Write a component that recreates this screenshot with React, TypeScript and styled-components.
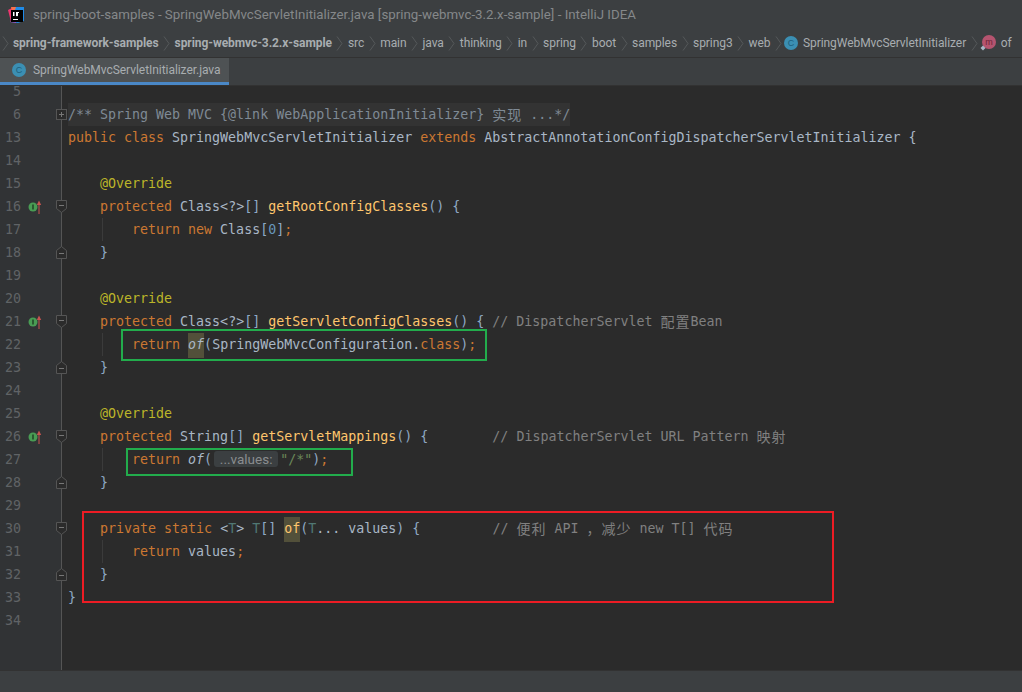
import React from "react";
import styled, { createGlobalStyle } from "styled-components";

type TokenKind = "plain" | "kw" | "method" | "anno" | "comment" | "doc" | "num" | "str" | "tparam" | "brace";
type Token = { t: string; k?: TokenKind; cjk?: boolean; italic?: boolean; hl?: boolean; hint?: boolean };
type Line = {
  no: number;
  fold?: "plus" | "open" | "close";
  marker?: boolean;
  guide?: boolean;
  shaded?: boolean;
  code: Token[];
};

const crumbs = ["src", "main", "java", "thinking", "in", "spring", "boot", "samples", "spring3", "web"];

const lines: Line[] = [
  { no: 5, code: [] },
  {
    no: 6,
    fold: "plus",
    shaded: true,
    code: [
      { t: "/** Spring Web MVC {@link WebApplicationInitializer} ", k: "doc" },
      { t: "实现", k: "doc", cjk: true },
      { t: " ...*/", k: "doc" },
    ],
  },
  {
    no: 13,
    code: [
      { t: "public class ", k: "kw" },
      { t: "SpringWebMvcServletInitializer " },
      { t: "extends ", k: "kw" },
      { t: "AbstractAnnotationConfigDispatcherServletInitializer {" },
    ],
  },
  { no: 14, code: [] },
  { no: 15, code: [{ t: "    " }, { t: "@Override", k: "anno" }] },
  {
    no: 16,
    fold: "open",
    marker: true,
    code: [
      { t: "    " },
      { t: "protected ", k: "kw" },
      { t: "Class<?>" },
      { t: "[] ", k: "brace" },
      { t: "getRootConfigClasses", k: "method" },
      { t: "() {", k: "brace" },
    ],
  },
  {
    no: 17,
    guide: true,
    code: [
      { t: "        " },
      { t: "return new ", k: "kw" },
      { t: "Class" },
      { t: "[", k: "brace" },
      { t: "0", k: "num" },
      { t: "]", k: "brace" },
      { t: ";", k: "kw" },
    ],
  },
  { no: 18, fold: "close", code: [{ t: "    " }, { t: "}", k: "brace" }] },
  { no: 19, code: [] },
  { no: 20, code: [{ t: "    " }, { t: "@Override", k: "anno" }] },
  {
    no: 21,
    fold: "open",
    marker: true,
    code: [
      { t: "    " },
      { t: "protected ", k: "kw" },
      { t: "Class<?>" },
      { t: "[] ", k: "brace" },
      { t: "getServletConfigClasses", k: "method" },
      { t: "() { ", k: "brace" },
      { t: "// DispatcherServlet ", k: "comment" },
      { t: "配置", k: "comment", cjk: true },
      { t: "Bean", k: "comment" },
    ],
  },
  {
    no: 22,
    guide: true,
    code: [
      { t: "        " },
      { t: "return ", k: "kw" },
      { t: "of", k: "plain", italic: true, hl: true },
      { t: "(", k: "brace" },
      { t: "SpringWebMvcConfiguration." },
      { t: "class", k: "kw" },
      { t: ")", k: "brace" },
      { t: ";", k: "kw" },
    ],
  },
  { no: 23, fold: "close", code: [{ t: "    " }, { t: "}", k: "brace" }] },
  { no: 24, code: [] },
  { no: 25, code: [{ t: "    " }, { t: "@Override", k: "anno" }] },
  {
    no: 26,
    fold: "open",
    marker: true,
    code: [
      { t: "    " },
      { t: "protected ", k: "kw" },
      { t: "String" },
      { t: "[] ", k: "brace" },
      { t: "getServletMappings", k: "method" },
      { t: "() {        ", k: "brace" },
      { t: "// DispatcherServlet URL Pattern ", k: "comment" },
      { t: "映射", k: "comment", cjk: true },
    ],
  },
  {
    no: 27,
    guide: true,
    code: [
      { t: "        " },
      { t: "return ", k: "kw" },
      { t: "of", italic: true },
      { t: "(", k: "brace" },
      { t: "...values:", hint: true },
      { t: '"/*"', k: "str" },
      { t: ")", k: "brace" },
      { t: ";", k: "kw" },
    ],
  },
  { no: 28, fold: "close", code: [{ t: "    " }, { t: "}", k: "brace" }] },
  { no: 29, code: [] },
  {
    no: 30,
    fold: "open",
    code: [
      { t: "    " },
      { t: "private static ", k: "kw" },
      { t: "<" },
      { t: "T", k: "tparam" },
      { t: "> " },
      { t: "T", k: "tparam" },
      { t: "[] ", k: "brace" },
      { t: "of", k: "method", hl: true },
      { t: "(", k: "brace" },
      { t: "T", k: "tparam" },
      { t: "... values" },
      { t: ") {         ", k: "brace" },
      { t: "// ", k: "comment" },
      { t: "便利", k: "comment", cjk: true },
      { t: " API ", k: "comment" },
      { t: "，减少", k: "comment", cjk: true },
      { t: " new T[] ", k: "comment" },
      { t: "代码", k: "comment", cjk: true },
    ],
  },
  {
    no: 31,
    guide: true,
    code: [{ t: "        " }, { t: "return ", k: "kw" }, { t: "values" }, { t: ";", k: "kw" }],
  },
  { no: 32, fold: "close", code: [{ t: "    " }, { t: "}", k: "brace" }] },
  { no: 33, code: [{ t: "}", k: "brace" }] },
  { no: 34, code: [] },
];

const Chevron = () => (
  <ChevronSvg viewBox="0 0 7 15" width="7" height="15">
    <path d="M1 .5 6 7.5 1 14.5" fill="none" stroke="#55595b" strokeWidth="1" />
  </ChevronSvg>
);

const ClassIcon = () => (
  <IconSvg width="14" height="14" viewBox="0 0 14 14">
    <circle cx="7" cy="7" r="7" fill="#3b8fb3" />
    <text x="7" y="10" textAnchor="middle" fontSize="9" fontFamily="Liberation Sans, sans-serif" fill="#1d5f7d">
      C
    </text>
  </IconSvg>
);

const MethodIcon = () => (
  <IconSvg width="16" height="16" viewBox="0 0 16 16">
    <circle cx="9" cy="7" r="7" fill="#b5546f" />
    <text x="9" y="10" textAnchor="middle" fontSize="9" fontFamily="Liberation Sans, sans-serif" fill="#6d2438">
      m
    </text>
    <path d="M3 10.5 5.5 13 3 15.5.5 13Z" fill="#a9b7c6" />
  </IconSvg>
);

const IdeaLogo = () => (
  <IconSvg width="16" height="16" viewBox="0 0 16 16">
    <path d="M0 3 6 0 8 8 3 15Z" fill="#f0366f" />
    <path d="M3 0H9L9 5 4 5Z" fill="#f9704a" />
    <path d="M8 0H16V14L10 16 3 15 6 6Z" fill="#1f8be8" />
    <path d="M2 15 8 9 8 16Z" fill="#9a4fc0" />
    <rect x="3" y="3" width="12" height="12" fill="#000" />
    <path d="M5 5H6.5V9H5ZM8 5H11V6H10V8.5Q10 9.5 8 9Z" fill="#fff" />
    <rect x="5" y="12" width="5" height="1" fill="#fff" />
  </IconSvg>
);

const ImplementsMark = () => (
  <svg width="16" height="14" viewBox="0 0 16 14">
    <circle cx="5" cy="7" r="4.5" fill="#499c54" />
    <rect x="4.3" y="4.5" width="1.4" height="5" fill="#1f3d22" />
    <path d="M11 14V3" stroke="#c75450" strokeWidth="1" />
    <path d="M8.8 5 11 .5 13.2 5Z" fill="#c75450" />
  </svg>
);

const FoldMark = ({ kind }: { kind: "plus" | "open" | "close" }) => {
  if (kind === "plus") {
    return (
      <svg width="11" height="11" viewBox="0 0 11 11">
        <rect x=".5" y=".5" width="10" height="10" fill="#2b2b2b" stroke="#555" />
        <path d="M3 5.5H8M5.5 3V8" stroke="#777" />
      </svg>
    );
  }
  const d = kind === "open" ? "M.5 .5H10.5V8.5L5.5 12.5.5 8.5Z" : "M.5 12.5H10.5V4.5L5.5 .5.5 4.5Z";
  const y = kind === "open" ? 5.5 : 7.5;
  return (
    <svg width="11" height="13" viewBox="0 0 11 13">
      <path d={d} fill="#2b2b2b" stroke="#555" />
      <path d={`M3 ${y}H8`} stroke="#777" />
    </svg>
  );
};

export default function App() {
  return (
    <>
      <GlobalStyle />
      <Window>
        <TitleBar>
          <IdeaLogo />
          <TitleText>spring-boot-samples - SpringWebMvcServletInitializer.java [spring-webmvc-3.2.x-sample] - IntelliJ IDEA</TitleText>
        </TitleBar>
        <Breadcrumbs>
          <Chevron />
          <Crumb $bold>spring-framework-samples</Crumb>
          <Chevron />
          <Crumb $bold>spring-webmvc-3.2.x-sample</Crumb>
          {crumbs.map((c) => (
            <React.Fragment key={c}>
              <Chevron />
              <Crumb>{c}</Crumb>
            </React.Fragment>
          ))}
          <Chevron />
          <CrumbIcon>
            <ClassIcon />
          </CrumbIcon>
          <Crumb>SpringWebMvcServletInitializer</Crumb>
          <Chevron />
          <CrumbIcon>
            <MethodIcon />
          </CrumbIcon>
          <Crumb>of</Crumb>
        </Breadcrumbs>
        <TabBar>
          <ActiveTab>
            <ClassIcon />
            <TabLabel>SpringWebMvcServletInitializer.java</TabLabel>
          </ActiveTab>
        </TabBar>
        <Editor>
          <Gutter>
            {lines.map((l) => (
              <GutterRow key={l.no}>
                <LineNo>{l.no}</LineNo>
                <MarkerSlot>{l.marker && <ImplementsMark />}</MarkerSlot>
                <FoldSlot>{l.fold && <FoldMark kind={l.fold} />}</FoldSlot>
              </GutterRow>
            ))}
          </Gutter>
          <Code>
            {lines.map((l) => (
              <CodeRow key={l.no} $guide={l.guide} $shaded={l.shaded}>
                {l.code.map((tok, i) =>
                  tok.hint ? (
                    <Hint key={i}>{tok.t}</Hint>
                  ) : tok.cjk ? (
                    <Cjk key={i} $k={tok.k ?? "plain"}>
                      {tok.t}
                    </Cjk>
                  ) : (
                    <Tok key={i} $k={tok.k ?? "plain"} $italic={tok.italic} $hl={tok.hl}>
                      {tok.t}
                    </Tok>
                  )
                )}
              </CodeRow>
            ))}
          </Code>
          <Callout $x={121} $y={243} $w={366} $h={32} $color="#22ac4c" />
          <Callout $x={126} $y={362} $w={227} $h={28} $color="#22ac4c" />
          <Callout $x={82} $y={425} $w={752} $h={92} $color="#ed1c24" />
        </Editor>
        <StatusBar />
      </Window>
    </>
  );
}

const colors: Record<TokenKind, string> = {
  plain: "#a9b7c6",
  kw: "#cc7832",
  method: "#ffc66d",
  anno: "#bbb529",
  comment: "#808080",
  doc: "#7f8a95",
  num: "#6897bb",
  str: "#6a8759",
  tparam: "#507874",
  brace: "#8fa9c4",
};

const GlobalStyle = createGlobalStyle`
  html, body {
    margin: 0;
    padding: 0;
    background: #2b2b2b;
  }
`;

const Window = styled.div`
  width: 1022px;
  height: 692px;
  display: flex;
  flex-direction: column;
  overflow: hidden;
  font-family: Roboto, "Open Sans", sans-serif;
`;
const IconSvg = styled.svg`
  flex: none;
`;
const TitleBar = styled.div`
  height: 29px;
  flex: none;
  display: flex;
  align-items: center;
  gap: 9px;
  padding-left: 8px;
  background: #3c3f41;
`;
const TitleText = styled.span`
  font-size: 13.3px;
  color: #85888a;
  white-space: nowrap;
`;
const Breadcrumbs = styled.div`
  height: 29px;
  flex: none;
  box-sizing: border-box;
  display: flex;
  align-items: center;
  gap: 4.5px;
  padding-left: 1.5px;
  background: #3c3f41;
  border-bottom: 1px solid #323232;
  white-space: nowrap;
`;
const ChevronSvg = styled.svg`
  flex: none;
`;
const CrumbIcon = styled.span`
  display: flex;
  margin-left: -2px;
`;
const Crumb = styled.span<{ $bold?: boolean }>`
  font-size: 12px;
  letter-spacing: -0.07px;
  font-weight: ${(p) => (p.$bold ? 700 : 400)};
  color: #a8adb0;
`;
const TabBar = styled.div`
  height: 27px;
  flex: none;
  display: flex;
  background: #3c3f41;
`;
const ActiveTab = styled.div`
  width: 229px;
  box-sizing: border-box;
  display: flex;
  align-items: center;
  gap: 7px;
  padding-left: 12px;
  background: #4e5254;
  border-bottom: 3px solid #4a88c7;
`;
const TabLabel = styled.span`
  font-size: 12px;
  letter-spacing: -0.05px;
  color: #a8adb0;
`;
const Editor = styled.div`
  flex: 1;
  min-height: 0;
  position: relative;
  display: flex;
  overflow: hidden;
  background: #2b2b2b;
  border-top: 1px solid #323232;
  box-sizing: border-box;
  font-family: "DejaVu Sans Mono", monospace;
  font-size: 13.3px;
`;
const Gutter = styled.div`
  width: 62px;
  flex: none;
  box-sizing: border-box;
  background: #313335;
  border-right: 1px solid #555;
  margin-top: -6px;
  padding-bottom: 6px;
`;
const GutterRow = styled.div`
  height: 23px;
  display: grid;
  grid-template-columns: 21px 35px 11px;
  align-items: center;
`;
const LineNo = styled.span`
  text-align: right;
  color: #606366;
`;
const MarkerSlot = styled.span`
  display: flex;
  padding-left: 7px;
`;
const FoldSlot = styled.span`
  display: flex;
  position: relative;
  z-index: 1;
`;
const Code = styled.div`
  flex: 1;
  margin-top: -6px;
`;
const CodeRow = styled.div<{ $guide?: boolean; $shaded?: boolean }>`
  height: 23px;
  width: ${(p) => (p.$shaded ? "502px" : "auto")};
  margin-left: 6px;
  line-height: 23px;
  white-space: pre;
  background: ${(p) =>
    p.$guide
      ? "linear-gradient(#3b3b3b, #3b3b3b) 34px 0 / 1px 100% no-repeat"
      : p.$shaded
        ? "#333333"
        : "transparent"};
`;
const Tok = styled.span<{ $k: TokenKind; $italic?: boolean; $hl?: boolean }>`
  display: inline-block;
  color: ${(p) => colors[p.$k]};
  font-style: ${(p) => (p.$italic ? "italic" : "normal")};
  background: ${(p) => (p.$hl ? "#52503a" : "transparent")};
  height: ${(p) => (p.$hl ? "25px" : "auto")};
  vertical-align: top;
`;
const Cjk = styled.span<{ $k: TokenKind }>`
  display: inline-block;
  vertical-align: top;
  color: ${(p) => colors[p.$k]};
  font-family: "Noto Sans CJK SC", sans-serif;
  font-size: 14px;
  letter-spacing: 1px;
`;
const Hint = styled.span`
  display: inline-block;
  box-sizing: border-box;
  width: 64px;
  height: 16px;
  margin: 3px 2px 0;
  vertical-align: top;
  text-align: center;
  border-radius: 3px;
  background: #3b3f41;
  color: #8a8d8f;
  font-family: Roboto, sans-serif;
  font-size: 13.5px;
  line-height: 16px;
`;
const Callout = styled.div<{ $x: number; $y: number; $w: number; $h: number; $color: string }>`
  position: absolute;
  left: ${(p) => p.$x}px;
  top: ${(p) => p.$y}px;
  width: ${(p) => p.$w}px;
  height: ${(p) => p.$h}px;
  box-sizing: border-box;
  border: 2px solid ${(p) => p.$color};
  pointer-events: none;
`;
const StatusBar = styled.div`
  height: 21px;
  flex: none;
  background: #3c3f41;
  border-top: 1px solid #323232;
`;
